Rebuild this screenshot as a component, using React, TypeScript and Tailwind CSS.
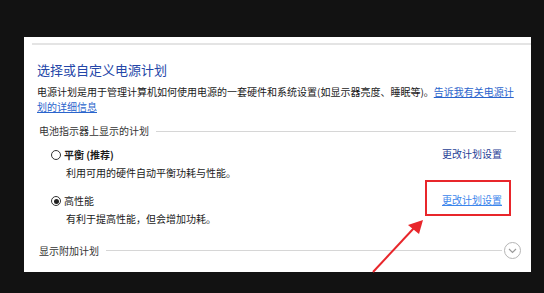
import React from "react";

const font = {
  fontFamily: '"Noto Sans CJK SC", "Noto Sans", sans-serif',
};

function Radio({ checked }: { checked?: boolean }) {
  return (
    <span className="flex h-[10px] w-[10px] shrink-0 items-center justify-center rounded-full border border-[#333] bg-white">
      {checked && <span className="h-[5px] w-[5px] rounded-full bg-[#222]" />}
    </span>
  );
}

function Plan({
  name,
  desc,
  checked,
  hover,
  bold,
}: {
  name: string;
  desc: string;
  checked?: boolean;
  hover?: boolean;
  bold?: boolean;
}) {
  return (
    <div>
      <div className="flex items-center pl-[14px] pr-[19px]">
        <Radio checked={checked} />
        <span
          className={
            "ml-[3px] text-[10px] leading-[14px] text-[#1a1a1a] " +
            (bold ? "font-bold" : "")
          }
        >
          {name}
        </span>
        <a
          className={
            "ml-auto -mt-[3px] text-[10px] leading-[14px] " +
            (hover ? "text-[#3c86ec] underline" : "text-[#1f4096]")
          }
        >
          更改计划设置
        </a>
      </div>
      <div className="mt-[4px] pl-[29px] text-[10px] leading-[14px] text-[#1a1a1a]">
        {desc}
      </div>
    </div>
  );
}

export default function App() {
  return (
    <div
      className="relative h-[293px] w-[544px] overflow-hidden bg-[#121212] pt-[37px]"
      style={font}
    >
      <div className="ml-[24px] h-[235px] w-[507px] bg-white pt-[6px]">
        <div className="ml-[8px] h-[2px] bg-[#e4e4e4]" />
        <div className="pl-[13px] pr-[10px]">
          <h1 className="mt-[16px] text-[13px] leading-[18px] text-[#2446a8]">
            选择或自定义电源计划
          </h1>
          <p className="mt-[5px] text-[10px] leading-[15px] text-[#1a1a1a]">
            <span className="whitespace-nowrap">
              电源计划是用于管理计算机如何使用电源的一套硬件和系统设置(如显示器亮度、睡眠等)。
              <a className="text-[#2a64cc] underline">告诉我有关电源计</a>
            </span>
            <br />
            <a className="text-[#2a64cc] underline">划的详细信息</a>
          </p>

          <div className="mt-[10px] flex items-center pl-[2px] pr-[5px]">
            <span className="text-[10px] leading-[14px] text-[#333]">
              电池指示器上显示的计划
            </span>
            <span className="ml-[7px] h-px flex-1 bg-[#d6d6d6]" />
          </div>

          <div className="mt-[10px]">
            <Plan
              name="平衡 (推荐)"
              desc="利用可用的硬件自动平衡功耗与性能。"
              bold
            />
          </div>
          <div className="mt-[14px]">
            <Plan
              name="高性能"
              desc="有利于提高性能，但会增加功耗。"
              checked
              hover
            />
          </div>

          <div className="mt-[16px] flex items-center pl-[2px]">
            <span className="text-[10px] leading-[14px] text-[#333]">
              显示附加计划
            </span>
            <span className="ml-[7px] h-px flex-1 bg-[#d6d6d6]" />
            <span className="ml-[2px] flex h-[17px] w-[17px] items-center justify-center rounded-full border border-[#b5b5b5]">
              <svg width="9" height="6" viewBox="0 0 9 6" fill="none">
                <path d="M1 1l3.5 3.5L8 1" stroke="#9a9a9a" strokeWidth="1.2" />
              </svg>
            </span>
          </div>
        </div>
      </div>

      {/* annotation: highlight box + arrow */}
      <div className="absolute left-[425px] top-[180px] h-[36px] w-[86px] border-2 border-[#e8262b]" />
      <svg
        className="absolute left-0 top-0"
        width="544"
        height="293"
        viewBox="0 0 544 293"
      >
        <line x1="373" y1="272" x2="414" y2="228" stroke="#e8262b" strokeWidth="2" />
        <polygon points="423,220 408,225 419,234" fill="#e8262b" />
      </svg>
    </div>
  );
}
